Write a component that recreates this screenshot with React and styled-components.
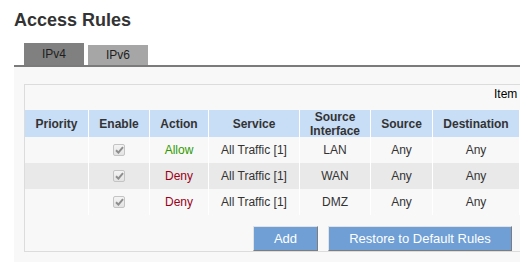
import React from "react";
import styled, { createGlobalStyle } from "styled-components";

const Global = createGlobalStyle`
  html, body { margin: 0; padding: 0; background: #fff; overflow: hidden; }
  body { font-family: "Liberation Sans", Arial, sans-serif; }
`;

const COLS = "64px 61px 59px 91px 71px 62px 87px 1fr";

const Page = styled.div`
  width: 737px;
  padding: 10px 0 0 14px;
`;

const Title = styled.h1`
  margin: 0;
  font-size: 18px;
  line-height: 20px;
  font-weight: bold;
  color: #333;
`;

const TabBar = styled.div`
  margin-top: 13px;
  display: flex;
  align-items: flex-end;
  gap: 4px;
  padding-left: 10px;
  border-bottom: 2px solid #7b7b7b;
`;

const Tab = styled.div`
  width: 60px;
  height: ${(p) => (p.$active ? 22 : 20)}px;
  line-height: ${(p) => (p.$active ? 22 : 20)}px;
  background: ${(p) => (p.$active ? "#808080" : "#a6a6a6")};
  color: #1e1e1e;
  font-size: 12px;
  text-align: center;
`;

const Panel = styled.div`
  background: #f8f8f8;
  padding: 17px 10px 10px 10px;
`;

const Box = styled.div`
  box-sizing: border-box;
  width: 717px;
  border: 1px solid #dcdcdc;
  background: #f8f8f8;
`;

const Toolbar = styled.div`
  box-sizing: border-box;
  height: 25px;
  padding: 2px 0 0 469px;
  font-size: 12px;
  line-height: 14px;
  color: #000;
  white-space: nowrap;
`;

const Row = styled.div`
  display: grid;
  grid-template-columns: ${COLS};
  height: ${(p) => (p.$head ? 27 : 26)}px;
  background: ${(p) => (p.$head ? "#c8ddf6" : p.$shade ? "#e9e9e9" : "transparent")};
  font-size: 12px;
  font-weight: ${(p) => (p.$head ? "bold" : "normal")};
  color: #333;
`;

const Cell = styled.div`
  box-sizing: border-box;
  display: flex;
  align-items: center;
  justify-content: center;
  text-align: center;
  border-right: 1px solid #fff;
  white-space: pre-wrap;
  overflow: hidden;
  color: ${(p) => p.$color || "inherit"};
`;

const Check = styled.span`
  box-sizing: border-box;
  width: 12px;
  height: 12px;
  border: 1px solid #c4c4c4;
  border-radius: 2px;
  background: linear-gradient(#f4f4f4, #e3e3e3);
  display: flex;
  align-items: center;
  justify-content: center;
`;

const Actions = styled.div`
  display: flex;
  justify-content: center;
  gap: 10px;
  padding-top: 11px;
`;

const Button = styled.button`
  box-sizing: border-box;
  width: ${(p) => p.$w}px;
  height: 25px;
  padding: 0;
  background: #6f9fd5;
  color: #fff;
  font-family: "Liberation Sans", Arial, sans-serif;
  font-size: 13px;
  border: 1px solid;
  border-color: #e2e2e2 #7d7d7d #7d7d7d #e2e2e2;
  cursor: pointer;
`;

const CheckIcon = () => (
  <Check>
    <svg width="9" height="8" viewBox="0 0 9 8">
      <path d="M1 4.3 L3.4 6.6 L8 1.2" fill="none" stroke="#8e8e8e" strokeWidth="2" />
    </svg>
  </Check>
);

const rules = [
  { action: "Allow", color: "#2e9a00", iface: "LAN" },
  { action: "Deny", color: "#9b0016", iface: "WAN" },
  { action: "Deny", color: "#9b0016", iface: "DMZ" },
];

export default function App() {
  return (
    <>
      <Global />
      <Page>
        <Title>Access Rules</Title>
        <TabBar>
          <Tab $active>IPv4</Tab>
          <Tab>IPv6</Tab>
        </TabBar>
        <Panel>
          <Box>
            <Toolbar>Item</Toolbar>
            <Row $head>
              <Cell>Priority</Cell>
              <Cell>Enable</Cell>
              <Cell>Action</Cell>
              <Cell>Service</Cell>
              <Cell>{"Source\nInterface"}</Cell>
              <Cell>Source</Cell>
              <Cell>Destination</Cell>
              <Cell />
            </Row>
            {rules.map((r, i) => (
              <Row key={i} $shade={i === 1}>
                <Cell />
                <Cell>
                  <CheckIcon />
                </Cell>
                <Cell $color={r.color}>{r.action}</Cell>
                <Cell>All Traffic [1]</Cell>
                <Cell>{r.iface}</Cell>
                <Cell>Any</Cell>
                <Cell>Any</Cell>
                <Cell />
              </Row>
            ))}
            <Actions>
              <Button $w={65}>Add</Button>
              <Button $w={184}>Restore to Default Rules</Button>
            </Actions>
          </Box>
        </Panel>
      </Page>
    </>
  );
}
